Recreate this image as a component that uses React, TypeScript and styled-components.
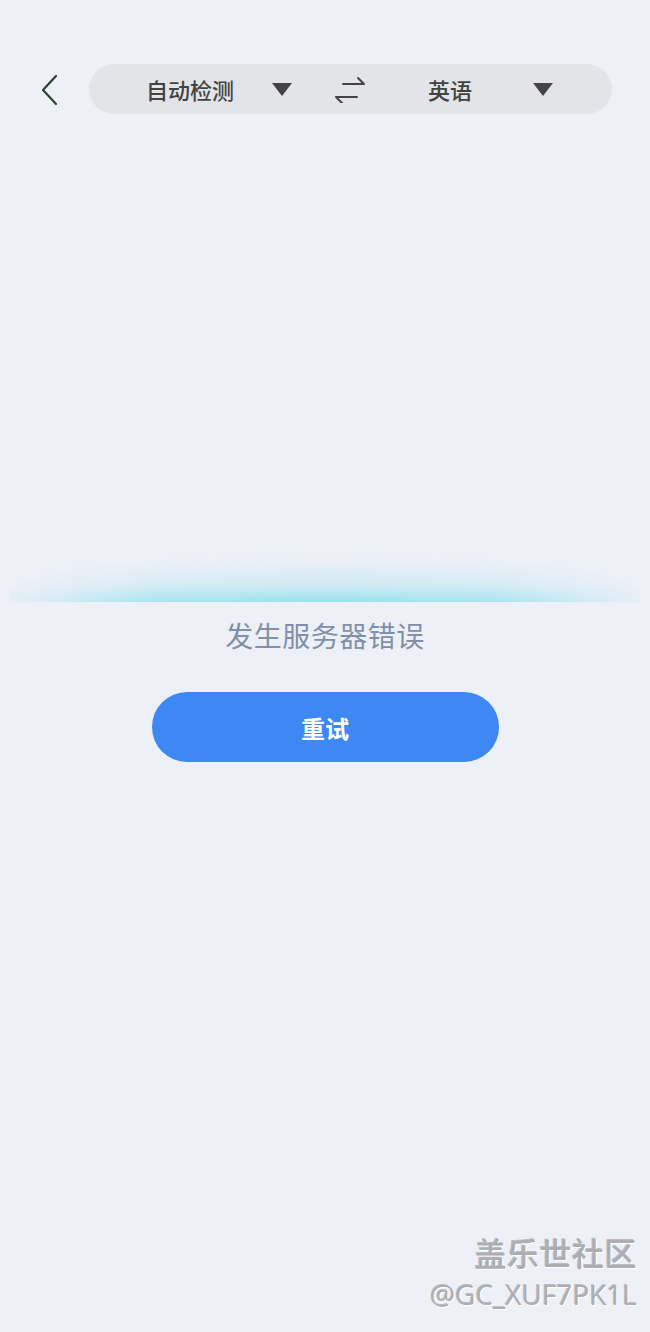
import React from 'react';
import styled, { createGlobalStyle } from 'styled-components';

const GlobalStyle = createGlobalStyle`
    html, body {
        margin: 0;
        padding: 0;
        background: #edf0f7;
    }
    body {
        font-family: "Noto Sans CJK SC", "Noto Sans", sans-serif;
    }
`;

const Page = styled.div`
    position: relative;
    width: 650px;
    height: 1332px;
    overflow: hidden;
    background: #edf0f7;
    display: flex;
    flex-direction: column;
`;

const TopBar = styled.header`
    display: flex;
    align-items: center;
    padding: 64px 38px 0 34px;
`;

const BackButton = styled.button`
    width: 32px;
    height: 50px;
    padding: 0;
    border: none;
    background: none;
    display: flex;
    align-items: center;
    justify-content: center;
    margin-right: 23px;
    cursor: pointer;
`;

const LangPill = styled.div`
    flex: 1;
    height: 50px;
    border-radius: 25px;
    background: #e3e4e7;
    display: flex;
    align-items: center;
`;

const LangSelect = styled.div<{ $width: number; $pad: number }>`
    width: ${p => p.$width}px;
    padding-left: ${p => p.$pad}px;
    display: flex;
    align-items: center;
    justify-content: space-between;
    box-sizing: border-box;
`;

const LangLabel = styled.span`
    font-size: 22px;
    font-weight: 500;
    color: #424242;
`;

const Caret = styled.span`
    width: 0;
    height: 0;
    border-left: 10px solid transparent;
    border-right: 10px solid transparent;
    border-top: 13px solid #444;
`;

const SwapButton = styled.div`
    width: 32px;
    height: 28px;
    margin: 0 42px 0 42px;
    display: flex;
    align-items: center;
    justify-content: center;
`;

const Content = styled.main`
    display: flex;
    flex-direction: column;
    align-items: center;
    padding-top: 442px;
`;

const Glow = styled.div`
    width: 630px;
    height: 46px;
    background: linear-gradient(to bottom, rgba(200, 238, 244, 0) 0%, rgba(178, 230, 242, 0.6) 65%, rgba(140, 224, 236, 0.9) 100%);
    -webkit-mask-image: radial-gradient(ellipse 52% 130% at 50% 100%, #000 0%, rgba(0, 0, 0, 0.75) 55%, rgba(0, 0, 0, 0) 100%);
    mask-image: radial-gradient(ellipse 52% 130% at 50% 100%, #000 0%, rgba(0, 0, 0, 0.75) 55%, rgba(0, 0, 0, 0) 100%);
`;

const ErrorText = styled.p`
    margin: 16px 0 0;
    font-size: 28px;
    line-height: 34px;
    color: #8090a8;
    letter-spacing: 0.5px;
`;

const RetryButton = styled.button`
    margin-top: 40px;
    width: 347px;
    height: 70px;
    border: none;
    border-radius: 35px;
    background: #3d88f2;
    color: #fff;
    font-family: "Noto Sans CJK SC", sans-serif;
    font-size: 24px;
    font-weight: 700;
    cursor: pointer;
`;

const Watermark = styled.div`
    position: absolute;
    right: 13px;
    bottom: 20px;
    display: flex;
    flex-direction: column;
    align-items: flex-end;
    color: #acaeb3;
    text-shadow: 1px 1px 0 #ffffff, -1px -1px 0 rgba(90, 90, 90, 0.35);
`;

const WatermarkTitle = styled.div`
    font-size: 32px;
    font-weight: 500;
    line-height: 40px;
    letter-spacing: 0.5px;
`;

const WatermarkHandle = styled.div`
    font-family: "Open Sans", "Noto Sans", sans-serif;
    font-size: 28px;
    line-height: 36px;
    margin-top: 4px;
`;

const App = () => {
    return (
        <Page>
            <GlobalStyle />
            <TopBar>
                <BackButton aria-label="back">
                    <svg width="20" height="36" viewBox="0 0 20 36" fill="none">
                        <path d="M16 5 L3 19 L16 33" stroke="#2d4030" strokeWidth="2.2" strokeLinecap="round" strokeLinejoin="round" />
                    </svg>
                </BackButton>
                <LangPill>
                    <LangSelect $width={203} $pad={57}>
                        <LangLabel>自动检测</LangLabel>
                        <Caret />
                    </LangSelect>
                    <SwapButton>
                        <svg width="32" height="28" viewBox="0 0 32 28" fill="none" stroke="#444" strokeWidth="2" strokeLinecap="round" strokeLinejoin="round">
                            <path d="M9 9 H30 M24 3 L30 9" />
                            <path d="M23 22 H2 M8 28 L2 22" />
                        </svg>
                    </SwapButton>
                    <LangSelect $width={145} $pad={20}>
                        <LangLabel>英语</LangLabel>
                        <Caret />
                    </LangSelect>
                </LangPill>
            </TopBar>
            <Content>
                <Glow />
                <ErrorText>发生服务器错误</ErrorText>
                <RetryButton>重试</RetryButton>
            </Content>
            <Watermark>
                <WatermarkTitle>盖乐世社区</WatermarkTitle>
                <WatermarkHandle>@GC_XUF7PK1L</WatermarkHandle>
            </Watermark>
        </Page>
    );
};

export default App;
